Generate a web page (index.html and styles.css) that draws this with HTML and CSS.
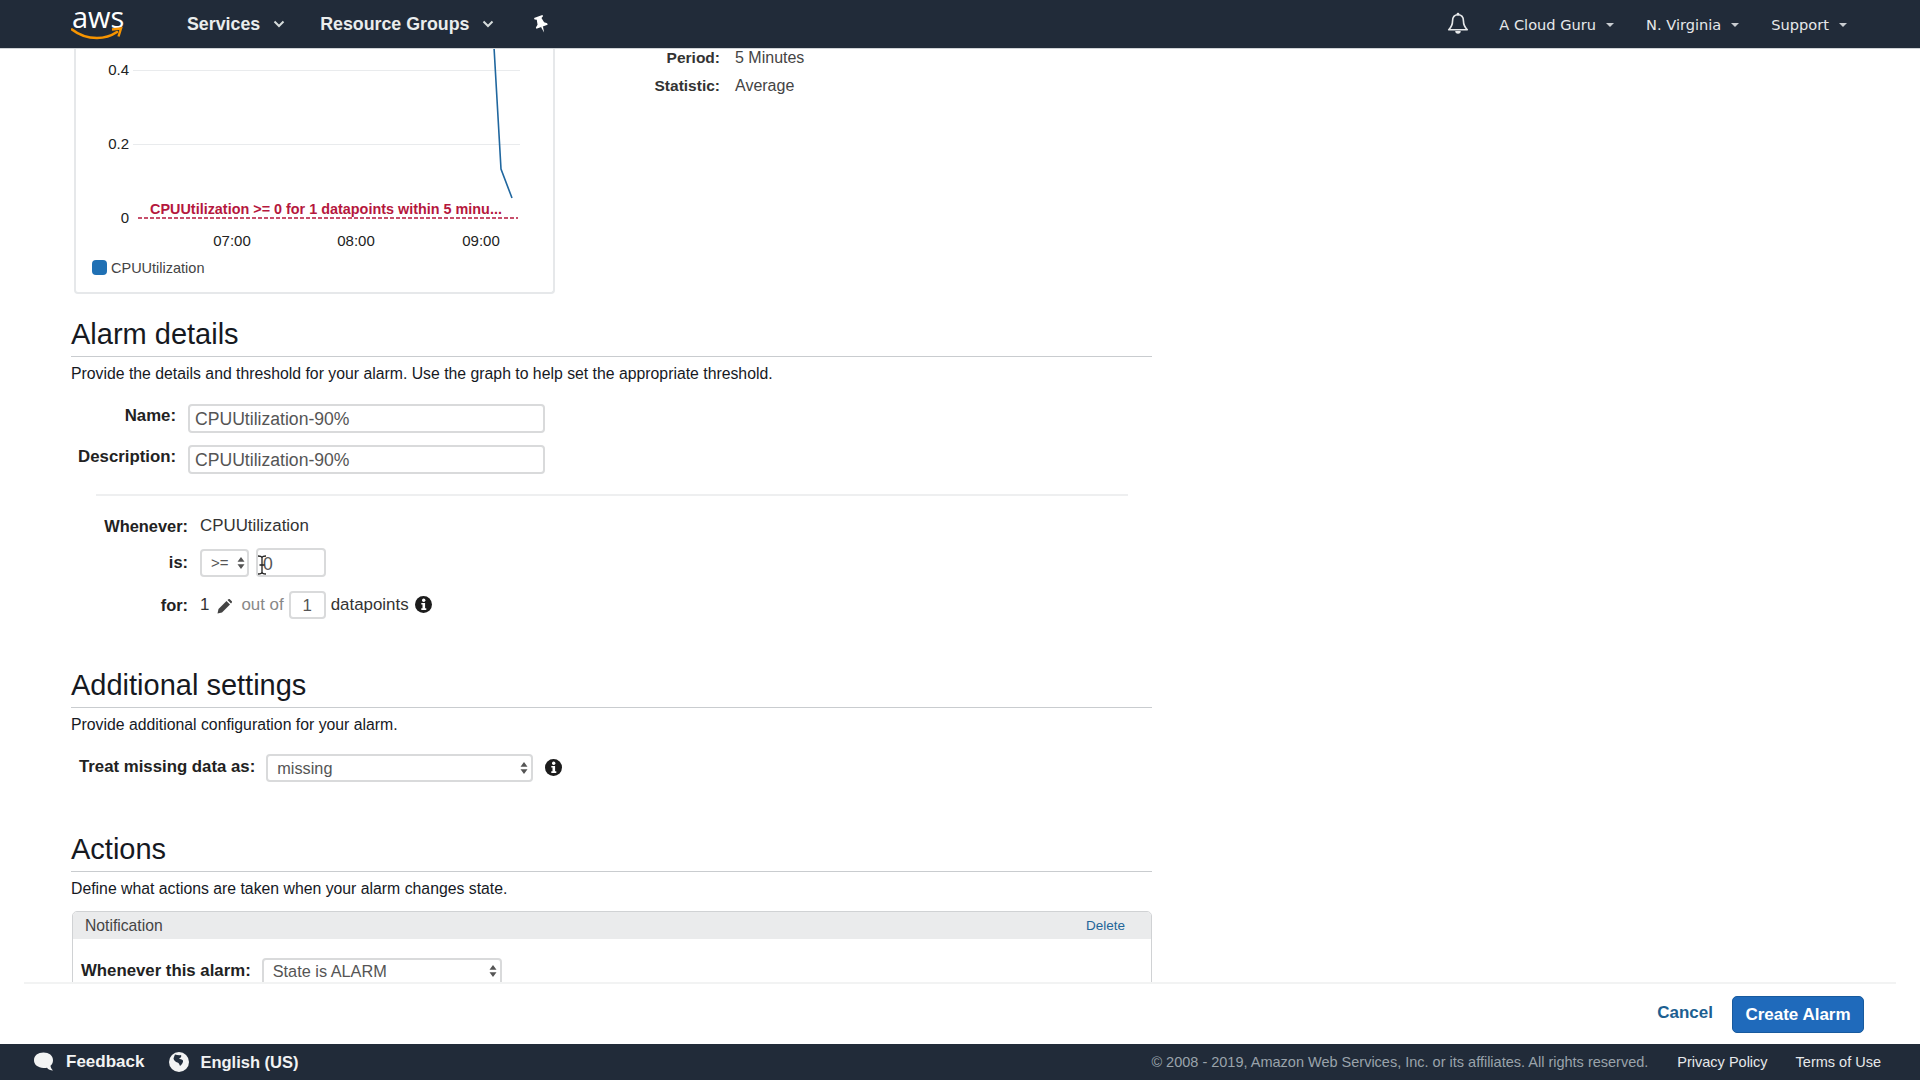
FILE: index.html
```html
<!DOCTYPE html>
<html lang="en">
<head>
<meta charset="utf-8">
<title>Create Alarm</title>
<link rel="stylesheet" href="styles.css">
</head>
<body>
<div class="app">
  <header class="topbar">
    <div class="logo">
      <span class="logo-text">aws</span>
      <svg class="logo-smile" width="52" height="14" viewBox="0 0 52 14"><path d="M1 2.500C8 8 17 11 26 11c7 0 14-2 20-6" fill="none" stroke="#f79400" stroke-width="2.600" stroke-linecap="round"/><path d="M41 2.500l9-1-2.500 8" fill="none" stroke="#f79400" stroke-width="2.400"/></svg>
    </div>
    <a class="nav-main nav-services">Services<svg class="chev" width="12" height="8" viewBox="0 0 12 8"><path d="M1.500 1.500L6 6l4.500-4.500" fill="none" stroke="#d5dbdb" stroke-width="2"/></svg></a>
    <a class="nav-main nav-groups">Resource Groups<svg class="chev" width="12" height="8" viewBox="0 0 12 8"><path d="M1.500 1.500L6 6l4.500-4.500" fill="none" stroke="#d5dbdb" stroke-width="2"/></svg></a>
    <svg class="pin" width="16" height="18" viewBox="0 0 16 18"><g transform="rotate(-20 8 9)"><path d="M3.500 1h9v1.500l-2 1 1 5 2.500 2v1.500H2V10.500l2.500-2 1-5-2-1zM7 12h2l-1 6z" fill="#fff"/></g></svg>
    <div class="spacer"></div>
    <svg class="bell" width="22" height="24" viewBox="0 0 20 22"><path d="M10 2.500c-3.500 0-5 2.800-5 5.800 0 4-1.500 6-3.500 8h17c-2-2-3.500-4-3.500-8 0-3-1.500-5.800-5-5.800z" fill="none" stroke="#e6e8ea" stroke-width="1.500" stroke-linejoin="round"/><circle cx="10" cy="2" r="1.300" fill="#e6e8ea"/><path d="M7.500 17.500a2.500 2.500 0 0 0 5 0z" fill="#e6e8ea"/></svg>
    <a class="nav-sub nav-guru">A Cloud Guru<i class="tri"></i></a>
    <a class="nav-sub nav-region">N. Virginia<i class="tri"></i></a>
    <a class="nav-sub nav-support">Support<i class="tri"></i></a>
  </header>

  <main class="main">
    <div class="chart-row">
      <div class="chart-card">
        <svg class="chart" width="478" height="242" viewBox="0 0 478 242">
          <g stroke="#e9ebed" stroke-width="1">
            <line x1="57" y1="21.500" x2="444" y2="21.500"/>
            <line x1="57" y1="95.500" x2="444" y2="95.500"/>
          </g>
          <g class="tick" text-anchor="end">
            <text x="53" y="26">0.4</text>
            <text x="53" y="100">0.2</text>
            <text x="53" y="174">0</text>
          </g>
          <g class="tick" text-anchor="middle">
            <text x="156" y="197">07:00</text>
            <text x="280" y="197">08:00</text>
            <text x="405" y="197">09:00</text>
          </g>
          <polyline points="418,-2 425,120 436,149" fill="none" stroke="#20679f" stroke-width="1.600"/>
          <line x1="62" y1="169" x2="442" y2="169" stroke="#b5173d" stroke-width="1.300" stroke-dasharray="4 2"/>
          <text class="thresh" x="250" y="165" text-anchor="middle">CPUUtilization &gt;= 0 for 1 datapoints within 5 minu...</text>
          <rect x="16" y="211" width="15" height="15" rx="4" fill="#1f70b4"/>
          <text class="legend" x="35" y="224">CPUUtilization</text>
        </svg>
      </div>
      <dl class="meta">
        <dt>Period:</dt><dd>5 Minutes</dd>
        <dt>Statistic:</dt><dd>Average</dd>
      </dl>
    </div>

    <section class="sec sec-details">
      <h2>Alarm details</h2>
      <p class="lead">Provide the details and threshold for your alarm. Use the graph to help set the appropriate threshold.</p>
      <div class="name-grid">
        <label>Name:</label><div class="field wide">CPUUtilization-90%</div>
        <label>Description:</label><div class="field wide">CPUUtilization-90%</div>
      </div>
      <hr class="divider">
      <div class="rule-grid">
        <label>Whenever:</label>
        <div class="rule-val">CPUUtilization</div>
        <label class="is-label">is:</label>
        <div class="rule-val is-row">
          <div class="select sel-op">&gt;=<svg class="updown" width="8" height="12" viewBox="0 0 8 12"><path d="M4 0l3.500 4.800h-7zM4 12L.5 7.200h7z" fill="#555"/></svg></div>
          <div class="field thr">0<svg class="ibeam" width="12" height="20" viewBox="0 0 12 20"><path d="M2 1c2 0 4 .5 4 2v14c0 1.500-2 2-4 2M10 1c-2 0-4 .5-4 2v14c0 1.500 2 2 4 2M3.500 10h5" fill="none" stroke="#222" stroke-width="1.300"/></svg></div>
        </div>
        <label>for:</label>
        <div class="rule-val for-row">
          <span>1</span>
          <svg class="pencil" width="15" height="15" viewBox="0 0 15 15"><path d="M0.500 14.500l1-4.500 8-8 3.500 3.500-8 8zM10.500 1l1-.8a1 1 0 0 1 1.300 0l2 2a1 1 0 0 1 0 1.300l-.8 1z" fill="#444"/></svg>
          <span class="muted">out of</span>
          <div class="field num">1</div>
          <span>datapoints</span>
          <svg class="info" width="17" height="17" viewBox="0 0 17 17"><circle cx="8.500" cy="8.500" r="8.500" fill="#1c1c1c"/><circle cx="8.700" cy="4.300" r="1.700" fill="#fff"/><path d="M6.300 7h3.800v5.300h1.200v1.600H6.300v-1.600h1.200V8.600H6.300z" fill="#fff"/></svg>
        </div>
      </div>
    </section>

    <section class="sec sec-additional">
      <h2>Additional settings</h2>
      <p class="lead">Provide additional configuration for your alarm.</p>
      <div class="treat-row">
        <label>Treat missing data as:</label>
        <div class="select sel-missing">missing<svg class="updown" width="8" height="12" viewBox="0 0 8 12"><path d="M4 0l3.500 4.800h-7zM4 12L.5 7.200h7z" fill="#555"/></svg></div>
        <svg class="info" width="17" height="17" viewBox="0 0 17 17"><circle cx="8.500" cy="8.500" r="8.500" fill="#1c1c1c"/><circle cx="8.700" cy="4.300" r="1.700" fill="#fff"/><path d="M6.300 7h3.800v5.300h1.200v1.600H6.300v-1.600h1.200V8.600H6.300z" fill="#fff"/></svg>
      </div>
    </section>

    <section class="sec sec-actions">
      <h2>Actions</h2>
      <p class="lead">Define what actions are taken when your alarm changes state.</p>
      <div class="panel">
        <div class="panel-head"><span>Notification</span><a class="delete">Delete</a></div>
        <div class="panel-body">
          <label>Whenever this alarm:</label>
          <div class="select sel-state">State is ALARM<svg class="updown" width="8" height="12" viewBox="0 0 8 12"><path d="M4 0l3.500 4.800h-7zM4 12L.5 7.200h7z" fill="#555"/></svg></div>
        </div>
      </div>
    </section>
  </main>

  <div class="actionbar">
    <a class="cancel">Cancel</a>
    <button class="create">Create Alarm</button>
  </div>

  <footer class="footer">
    <svg class="f-chat" width="22" height="22" viewBox="0 0 22 22"><path d="M10.500 1.500c5.500 0 9.500 3 9.500 7.700 0 2.500-1 4.300-2.500 5.500.2 2 1.300 3.500 2.500 4.800-2.600 0-4.700-1-6-2.700-1 .2-2.300.3-3.500.2C5 16.600 1 13.800 1 9.200 1 4.500 5 1.500 10.500 1.500z" fill="#f2f3f3"/></svg>
    <a class="f-main f-feedback">Feedback</a>
    <svg class="f-globe" width="20" height="20" viewBox="0 0 20 20"><circle cx="10" cy="10" r="10" fill="#f2f3f3"/><path d="M6 2.500c2 .5 4 1 6 .5 1 1.500-.5 3-2 3.500 1 1 3 .5 4 2 .5 1.500-1 4-3 5.500-.5-1.500-1-3-2.500-3.500C6.500 10 5 8.500 4.500 6.500 5 5 5.500 3.500 6 2.500z" fill="#232f3e"/></svg>
    <a class="f-main">English (US)</a>
    <div class="spacer"></div>
    <span class="copy">© 2008 - 2019, Amazon Web Services, Inc. or its affiliates. All rights reserved.</span>
    <a class="f-link f-privacy">Privacy Policy</a>
    <a class="f-link f-terms">Terms of Use</a>
  </footer>
</div>
</body>
</html>
```
FILE: styles.css
```css
* { box-sizing: border-box; }
html, body { margin: 0; height: 100%; }
body { font-family: "Liberation Sans", Arial, sans-serif; color: #16191f; background: #fff; overflow: hidden; }
a { text-decoration: none; }

.app { display: flex; flex-direction: column; height: 1080px; }
.spacer { flex: 1; }

/* top bar */
.topbar { flex: none; height: 49px; background: #212b39; display: flex; align-items: center; border-bottom: 1px solid #cfd3d6; padding-left: 72px; }
.logo { width: 50px; height: 44px; position: relative; flex: none; margin-right: 65px; }
.logo-text { position: absolute; left: 0; top: 1px; font-family: "Open Sans", sans-serif; font-size: 29px; line-height: 28px; color: #fff; }
.logo-smile { position: absolute; left: -1px; top: 25px; }
.nav-main { color: #eaeded; font-weight: 700; font-size: 17.800px; display: flex; align-items: center; }
.chev { margin-left: 13px; }
.nav-services { margin-right: 35px; }
.nav-groups { margin-right: 39px; }
.pin { flex: none; }
.bell { flex: none; margin-right: 30px; }
.nav-sub { font-family: "DejaVu Sans", sans-serif; font-size: 14.600px; color: #e6e8ea; display: flex; align-items: center; }
.tri { display: block; width: 0; height: 0; border-left: 4.500px solid transparent; border-right: 4.500px solid transparent; border-top: 4.500px solid #c9cdd1; margin-left: 10px; margin-top: 2px; }
.nav-guru { margin-right: 32px; }
.nav-region { margin-right: 32px; }
.nav-support { margin-right: 73px; }

/* main */
.main { flex: 1; min-height: 0; overflow: hidden; padding-left: 71px; }
.chart-row { display: flex; height: 244px; }
.chart-card { width: 481px; height: 245px; margin-left: 3px; border: 2px solid #e6e8ea; border-top: 0; border-radius: 0 0 4px 4px; flex: none; }
.chart { display: block; overflow: hidden; }
.tick text { font-size: 15px; fill: #222; }
.thresh { font-size: 14.400px; font-weight: 700; fill: #b5173d; }
.legend { font-size: 14.500px; fill: #444; }

.meta { margin: -5px 0 0 0; display: grid; grid-template-columns: 165px auto; grid-auto-rows: 28px; column-gap: 15px; align-items: center; height: 56px; }
.meta dt { font-weight: 700; text-align: right; color: #333; font-size: 15.500px; }
.meta dd { margin: 0; color: #444; font-size: 16px; }

.sec { width: 1081px; }
.sec h2 { margin: 0; font-weight: 400; font-size: 29px; line-height: 38px; color: #16191f; border-bottom: 1px solid #c9cccf; padding-bottom: 3px; }
.lead { margin: 0; font-size: 15.800px; line-height: 20px; padding-top: 7px; color: #16191f; }
.sec-details { padding-top: 22px; }
.sec-additional { margin-top: 47px; }
.sec-actions { margin-top: 48px; }

label { font-weight: 700; font-size: 16.800px; color: #222; text-align: right; }

.name-grid { display: grid; grid-template-columns: 105px 357px; column-gap: 12px; row-gap: 12px; margin-top: 20px; }
.name-grid label { line-height: 24px; }
.field { border: 2px solid #d9dadb; border-radius: 4px; color: #555; font-size: 17.600px; background: #fff; }
.wide { height: 29px; line-height: 27px; padding-left: 5px; }

.divider { border: 0; border-top: 2px solid #eeeff0; margin: 20px 24px 0 25px; }

.rule-grid { display: grid; grid-template-columns: 117px auto; column-gap: 12px; margin-top: 20px; align-items: center; font-size: 16.900px; }
.rule-grid label { line-height: 20px; font-size: 16.400px; }
.rule-val { color: #333; display: flex; align-items: center; }
.rule-grid > :nth-child(1), .rule-grid > :nth-child(2) { height: 20px; margin-bottom: 12px; }
.rule-grid > :nth-child(3) { margin-bottom: 8px; }
.rule-grid > :nth-child(4) { margin-bottom: 14px; }
.is-label { position: relative; top: -4px; }
.is-row { gap: 8px; }
.select { border: 2px solid #d9dadb; border-radius: 4px; height: 28px; display: flex; align-items: center; justify-content: space-between; color: #555; background: #fff; font-size: 16.300px; }
.sel-op { width: 49px; padding: 0 2px 0 9px; font-size: 15px; }
.thr { width: 70px; height: 29px; line-height: 28px; padding-left: 5px; position: relative; margin-left: -1px; }
.ibeam { position: absolute; left: -2px; top: 5px; }
.for-row { height: 28px; }
.pencil { margin: 2px 9px 0 8px; }
.muted { color: #888; }
.num { width: 37px; height: 28px; line-height: 25px; text-align: center; margin: 0 5px; font-size: 16.900px; }
.info { flex: none; margin-left: 6px; margin-top: -2px; }

.treat-row { display: flex; align-items: center; margin-top: 19px; padding-left: 8px; }
.treat-row label { margin-right: 11px; margin-top: -3px; }
.sel-missing { width: 267px; padding: 0 3px 0 9px; }
.treat-row .info { margin-left: 12px; }

.panel { border: 1px solid #d0d2d4; border-radius: 5px 5px 0 0; margin: 12px 0 0 1px; height: 120px; }
.panel-head { height: 27px; background: #eaebec; display: flex; justify-content: space-between; align-items: center; padding: 0 26px 0 12px; font-size: 15.700px; color: #444; border-radius: 4px 4px 0 0; }
.delete { color: #1f6699; font-size: 13.500px; }
.panel-body { display: flex; padding: 19px 0 0 8px; }
.panel-body label { margin-right: 12px; line-height: 25px; }
.sel-state { width: 240px; padding: 0 3px 0 9px; height: 30px; align-items: flex-start; line-height: 22px; margin-left: -1px; }
.sel-state .updown { margin-top: 5px; }

/* action bar */
.actionbar { flex: none; height: 62px; margin: 0 24px; border-top: 2px solid #f2f3f3; display: flex; justify-content: flex-end; align-items: flex-start; padding: 12px 32px 0 0; }
.cancel { color: #1d5f91; font-weight: 700; font-size: 17px; margin: 11px 19px 0 0; line-height: 12px; }
.create { width: 132px; height: 37px; background: #1f6abb; border: 1px solid #175a9e; border-radius: 5px; color: #fff; font-family: inherit; font-weight: 700; font-size: 17px; padding: 0; }

/* footer */
.footer { flex: none; height: 36px; background: #212b39; display: flex; align-items: center; padding-left: 33px; padding-right: 39px; }
.f-main { color: #f2f3f3; font-weight: 700; font-size: 16.500px; }
.f-chat { margin-right: 11px; }
.f-feedback { margin-right: 25px; font-size: 17px; }
.f-globe { margin-right: 11px; }
.copy { color: #9aa3ab; font-size: 14.500px; margin-right: 29px; }
.f-link { color: #e6e8ea; font-size: 14.500px; }
.f-privacy { margin-right: 28px; }
```
